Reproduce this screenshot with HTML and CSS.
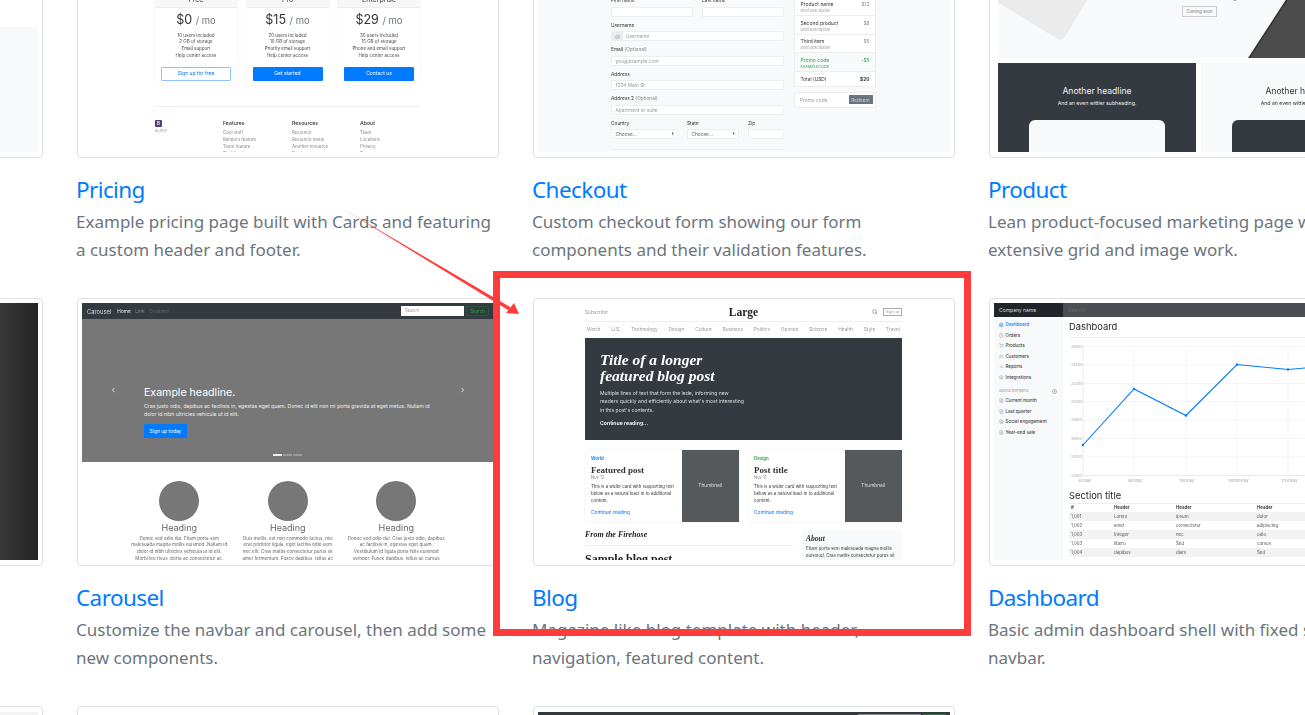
FILE: index.html
```html
<!DOCTYPE html>
<html lang="en">
<head>
	<meta charset="UTF-8">
	<title>Examples</title>
	<link rel="stylesheet" href="styles.css">
</head>
<body>
<div class="grid">

	<!-- row 1 -->
	<div class="item">
		<div class="card"><div class="thumb album-top"></div></div>
	</div>

	<div class="item">
		<div class="card"><div class="thumb pricing">
			<div class="plans">
				<div class="plan">
					<div class="plan-head">Free</div>
					<div class="price">$0 <small>/ mo</small></div>
					<ul><li>10 users included</li><li>2 GB of storage</li><li>Email support</li><li>Help center access</li></ul>
					<div class="plan-btn outline">Sign up for free</div>
				</div>
				<div class="plan">
					<div class="plan-head">Pro</div>
					<div class="price">$15 <small>/ mo</small></div>
					<ul><li>20 users included</li><li>10 GB of storage</li><li>Priority email support</li><li>Help center access</li></ul>
					<div class="plan-btn">Get started</div>
				</div>
				<div class="plan">
					<div class="plan-head">Enterprise</div>
					<div class="price">$29 <small>/ mo</small></div>
					<ul><li>30 users included</li><li>15 GB of storage</li><li>Phone and email support</li><li>Help center access</li></ul>
					<div class="plan-btn">Contact us</div>
				</div>
			</div>
			<div class="foot">
				<div><span class="logo">B</span><p class="copy">© 2017</p></div>
				<div><h5>Features</h5><p>Cool stuff</p><p>Random feature</p><p>Team feature</p><p>Stuff for devs</p></div>
				<div><h5>Resources</h5><p>Resource</p><p>Resource name</p><p>Another resource</p><p>Final one</p></div>
				<div><h5>About</h5><p>Team</p><p>Locations</p><p>Privacy</p><p>Terms</p></div>
			</div>
		</div></div>
	</div>

	<div class="item">
		<div class="card"><div class="thumb checkout">
			<div class="co-form">
				<div class="co-row">
					<div class="field half"><label>First name</label><div class="inp"></div></div>
					<div class="field half"><label>Last name</label><div class="inp"></div></div>
				</div>
				<div class="field"><label>Username</label><div class="inp addon"><b>@</b>Username</div></div>
				<div class="field"><label>Email <i>(Optional)</i></label><div class="inp">you@example.com</div></div>
				<div class="field"><label>Address</label><div class="inp">1234 Main St</div></div>
				<div class="field"><label>Address 2 <i>(Optional)</i></label><div class="inp">Apartment or suite</div></div>
				<div class="co-row">
					<div class="field country"><label>Country</label><div class="inp sel">Choose...<span>⬍</span></div></div>
					<div class="field state"><label>State</label><div class="inp sel">Choose...<span>⬍</span></div></div>
					<div class="field zip"><label>Zip</label><div class="inp"></div></div>
				</div>
				<div class="co-line"></div>
			</div>
			<div class="co-side">
				<div class="co-list">
					<div class="co-item"><div><h6>Product name</h6><small>Brief description</small></div><span>$12</span></div>
					<div class="co-item"><div><h6>Second product</h6><small>Brief description</small></div><span>$8</span></div>
					<div class="co-item"><div><h6>Third item</h6><small>Brief description</small></div><span>$5</span></div>
					<div class="co-item promo"><div><h6>Promo code</h6><small>EXAMPLECODE</small></div><span>-$5</span></div>
					<div class="co-item total"><b>Total (USD)</b><strong>$20</strong></div>
				</div>
				<div class="redeem"><div class="redeem-inp">Promo code</div><div class="redeem-btn">Redeem</div></div>
			</div>
		</div></div>
	</div>

	<div class="item">
		<div class="card"><div class="thumb product">
			<div class="pr-top">
				<svg class="pr-shapes" width="403" height="163" viewBox="0 0 403 163">
					<polygon points="-4,105 58,143 63,145 67,142 92,100 92,95 -4,95" fill="#ebebeb"/>
					<polygon points="250,163 304,80 403,80 403,163" fill="#333"/>
					<polygon points="252,163 306,80 403,80 403,163" fill="#4c4c4c"/>
				</svg>
				<p class="pr-sub">And an even wittier subheading to boost</p>
				<div class="pr-btn">Coming soon</div>
			</div>
			<div class="pr-panels">
				<div class="panel dark"><h4>Another headline</h4><p>And an even wittier subheading.</p><div class="pr-box"></div></div>
				<div class="panel light"><h4>Another headline</h4><p>And an even wittier subheading.</p><div class="pr-box"></div></div>
			</div>
		</div></div>
	</div>

	<!-- titles row 1 -->
	<div class="caption"></div>
	<div class="caption"><h3>Pricing</h3><p>Example pricing page built with Cards and featuring a custom header and footer.</p></div>
	<div class="caption"><h3>Checkout</h3><p>Custom checkout form showing our form components and their validation features.</p></div>
	<div class="caption"><h3>Product</h3><p>Lean product-focused marketing page with extensive grid and image work.</p></div>

	<!-- row 2 -->
	<div class="item">
		<div class="card"><div class="thumb cover"></div></div>
	</div>

	<div class="item">
		<div class="card"><div class="thumb carousel">
			<div class="ca-nav">
				<span class="ca-brand">Carousel</span>
				<span class="ca-link on">Home</span><span class="ca-link">Link</span><span class="ca-link off">Disabled</span>
				<div class="ca-search">Search</div><div class="ca-go">Search</div>
			</div>
			<div class="ca-hero">
				<svg class="ca-arrow prev" width="5" height="6" viewBox="0 0 5 6"><path d="M3.5 .8 1.4 3l2.1 2.2" fill="none" stroke="#ddd" stroke-width="1"/></svg>
				<svg class="ca-arrow next" width="5" height="6" viewBox="0 0 5 6"><path d="M1.5 .8 3.6 3 1.5 5.2" fill="none" stroke="#ddd" stroke-width="1"/></svg>
				<h2>Example headline.</h2>
				<p>Cras justo odio, dapibus ac facilisis in, egestas eget quam. Donec id elit non mi porta gravida at eget metus. Nullam id<br>dolor id nibh ultricies vehicula ut id elit.</p>
				<div class="ca-btn">Sign up today</div>
				<div class="ca-dots"><i class="on"></i><i></i><i></i></div>
			</div>
			<div class="ca-cols">
				<div class="ca-col"><span class="ball"></span><h4>Heading</h4><p>Donec sed odio dui. Etiam porta sem<br>malesuada magna mollis euismod. Nullam id<br>dolor id nibh ultricies vehicula ut id elit.<br>Morbi leo risus, porta ac consectetur ac.</p></div>
				<div class="ca-col"><span class="ball"></span><h4>Heading</h4><p>Duis mollis, est non commodo luctus, nisi<br>erat porttitor ligula, eget lacinia odio sem<br>nec elit. Cras mattis consectetur purus sit<br>amet fermentum. Fusce dapibus, tellus ac</p></div>
				<div class="ca-col"><span class="ball"></span><h4>Heading</h4><p>Donec sed odio dui. Cras justo odio, dapibus<br>ac facilisis in, egestas eget quam.<br>Vestibulum id ligula porta felis euismod<br>semper. Fusce dapibus, tellus ac cursus</p></div>
			</div>
		</div></div>
	</div>

	<div class="item">
		<div class="card"><div class="thumb blog">
			<div class="bl-head">
				<span class="bl-sub">Subscribe</span>
				<span class="bl-logo">Large</span>
				<span class="bl-tools">
					<svg width="6" height="6" viewBox="0 0 24 24" fill="none" stroke="#777" stroke-width="2.6"><circle cx="10.5" cy="10.5" r="7.5"/><path d="M21 21l-5.2-5.2"/></svg>
					<span class="bl-sign">Sign up</span>
				</span>
			</div>
			<div class="bl-nav"><span>World</span><span>U.S.</span><span>Technology</span><span>Design</span><span>Culture</span><span>Business</span><span>Politics</span><span>Opinion</span><span>Science</span><span>Health</span><span>Style</span><span>Travel</span></div>
			<div class="bl-hero">
				<h1>Title of a longer<br>featured blog post</h1>
				<p>Multiple lines of text that form the lede, informing new<br>readers quickly and efficiently about what's most interesting<br>in this post's contents.</p>
				<b>Continue reading...</b>
			</div>
			<div class="bl-cards">
				<div class="bl-card">
					<div class="bl-body">
						<span class="tag blue">World</span>
						<h3>Featured post</h3>
						<small>Nov 12</small>
						<p>This is a wider card with supporting text<br>below as a natural lead-in to additional<br>content.</p>
						<span class="more">Continue reading</span>
					</div>
					<div class="bl-thumb">Thumbnail</div>
				</div>
				<div class="bl-card">
					<div class="bl-body">
						<span class="tag green">Design</span>
						<h3>Post title</h3>
						<small>Nov 11</small>
						<p>This is a wider card with supporting text<br>below as a natural lead-in to additional<br>content.</p>
						<span class="more">Continue reading</span>
					</div>
					<div class="bl-thumb">Thumbnail</div>
				</div>
			</div>
			<div class="bl-low">
				<div class="bl-main">
					<h4>From the Firehose</h4>
					<h2>Sample blog post</h2>
				</div>
				<div class="bl-about">
					<h5>About</h5>
					<p>Etiam porta sem malesuada magna mollis euismod. Cras mattis consectetur purus sit amet fermentum.</p>
				</div>
			</div>
		</div></div>
	</div>

	<div class="item">
		<div class="card"><div class="thumb dash">
			<div class="da-nav"><span class="da-brand">Company name</span><span class="da-search">Search</span></div>
			<div class="da-wrap">
				<div class="da-side">
					<div class="da-link on"><svg viewBox="0 0 24 24" fill="#9cc8ff" stroke="currentColor" stroke-width="2"><path d="M3 9l9-7 9 7v11a2 2 0 0 1-2 2H5a2 2 0 0 1-2-2z"/></svg>Dashboard</div>
					<div class="da-link"><svg viewBox="0 0 24 24" fill="none" stroke="#888" stroke-width="2"><path d="M13 2H6a2 2 0 0 0-2 2v16a2 2 0 0 0 2 2h12a2 2 0 0 0 2-2V9z"/><path d="M13 2v7h7"/></svg>Orders</div>
					<div class="da-link"><svg viewBox="0 0 24 24" fill="none" stroke="#888" stroke-width="2"><circle cx="9" cy="21" r="1"/><circle cx="20" cy="21" r="1"/><path d="M1 1h4l2.7 13.4a2 2 0 0 0 2 1.6h9.7a2 2 0 0 0 2-1.6L23 6H6"/></svg>Products</div>
					<div class="da-link"><svg viewBox="0 0 24 24" fill="none" stroke="#888" stroke-width="2"><path d="M17 21v-2a4 4 0 0 0-4-4H5a4 4 0 0 0-4 4v2"/><circle cx="9" cy="7" r="4"/><path d="M23 21v-2a4 4 0 0 0-3-3.9M16 3.1a4 4 0 0 1 0 7.8"/></svg>Customers</div>
					<div class="da-link"><svg viewBox="0 0 24 24" fill="none" stroke="#888" stroke-width="2"><path d="M18 20V10M12 20V4M6 20v-6"/></svg>Reports</div>
					<div class="da-link"><svg viewBox="0 0 24 24" fill="none" stroke="#888" stroke-width="2"><path d="M12 2 2 7l10 5 10-5zM2 17l10 5 10-5M2 12l10 5 10-5"/></svg>Integrations</div>
					<div class="da-saved">SAVED REPORTS<svg width="5" height="5" viewBox="0 0 24 24" fill="none" stroke="#888" stroke-width="2.5"><circle cx="12" cy="12" r="10"/><path d="M12 8v8M8 12h8"/></svg></div>
					<div class="da-link"><svg viewBox="0 0 24 24" fill="none" stroke="#888" stroke-width="2"><path d="M14 2H6a2 2 0 0 0-2 2v16a2 2 0 0 0 2 2h12a2 2 0 0 0 2-2V8z"/><path d="M14 2v6h6M16 13H8M16 17H8"/></svg>Current month</div>
					<div class="da-link"><svg viewBox="0 0 24 24" fill="none" stroke="#888" stroke-width="2"><path d="M14 2H6a2 2 0 0 0-2 2v16a2 2 0 0 0 2 2h12a2 2 0 0 0 2-2V8z"/><path d="M14 2v6h6M16 13H8M16 17H8"/></svg>Last quarter</div>
					<div class="da-link"><svg viewBox="0 0 24 24" fill="none" stroke="#888" stroke-width="2"><path d="M14 2H6a2 2 0 0 0-2 2v16a2 2 0 0 0 2 2h12a2 2 0 0 0 2-2V8z"/><path d="M14 2v6h6M16 13H8M16 17H8"/></svg>Social engagement</div>
					<div class="da-link"><svg viewBox="0 0 24 24" fill="none" stroke="#888" stroke-width="2"><path d="M14 2H6a2 2 0 0 0-2 2v16a2 2 0 0 0 2 2h12a2 2 0 0 0 2-2V8z"/><path d="M14 2v6h6M16 13H8M16 17H8"/></svg>Year-end sale</div>
				</div>
				<div class="da-main">
					<h2>Dashboard</h2>
					<svg class="da-chart" width="236" height="145" viewBox="0 0 236 145">
						<g stroke="#eee" stroke-width=".6">
							<path d="M14 5.5H236M14 24H236M14 42.5H236M14 60.5H236M14 79H236M14 97.5H236M14 116H236"/>
							<path d="M65 5V134.5M117 5V134.5M168 5V134.5M219 5V134.5"/>
						</g>
						<path d="M14 5V134.5H236" fill="none" stroke="#ddd" stroke-width=".6"/>
						<g font-family="Inter, sans-serif" font-size="3.7" fill="#aaa">
							<text x="2" y="6.5">26000</text><text x="2" y="25">24000</text><text x="2" y="43.5">22000</text><text x="2" y="61.5">20000</text><text x="2" y="80">18000</text><text x="2" y="98.5">16000</text><text x="2" y="117">14000</text><text x="2" y="135.5">12000</text>
							<text x="9" y="140.5">Sunday</text><text x="59" y="140.5">Monday</text><text x="110" y="140.5">Tuesday</text><text x="159" y="140.5">Wednesday</text><text x="212" y="140.5">Thursday</text>
						</g>
						<path d="M14 104 65 48 117 74.5 168 23.5 219 28.5 236 27" fill="none" stroke="#007bff" stroke-width="1.1"/>
						<g fill="#007bff"><circle cx="14" cy="104" r="1.2"/><circle cx="65" cy="48" r="1.2"/><circle cx="117" cy="74.5" r="1.2"/><circle cx="168" cy="23.5" r="1.2"/><circle cx="219" cy="28.5" r="1.2"/></g>
					</svg>
					<h3>Section title</h3>
					<table class="da-table">
						<tr><th>#</th><th>Header</th><th>Header</th><th>Header</th><th>Header</th></tr>
						<tr><td>1,001</td><td>Lorem</td><td>ipsum</td><td>dolor</td><td>sit</td></tr>
						<tr><td>1,002</td><td>amet</td><td>consectetur</td><td>adipiscing</td><td>elit</td></tr>
						<tr><td>1,003</td><td>Integer</td><td>nec</td><td>odio</td><td>Praesent</td></tr>
						<tr><td>1,003</td><td>libero</td><td>Sed</td><td>cursus</td><td>ante</td></tr>
						<tr><td>1,004</td><td>dapibus</td><td>diam</td><td>Sed</td><td>nisi</td></tr>
					</table>
				</div>
			</div>
		</div></div>
	</div>

	<!-- titles row 2 -->
	<div class="caption"></div>
	<div class="caption"><h3>Carousel</h3><p>Customize the navbar and carousel, then add some new components.</p></div>
	<div class="caption"><h3>Blog</h3><p>Magazine like blog template with header, navigation, featured content.</p></div>
	<div class="caption"><h3>Dashboard</h3><p>Basic admin dashboard shell with fixed sidebar and navbar.</p></div>

	<!-- row 3, only the top edge shows -->
	<div class="item"><div class="card"><div class="thumb next-pale"></div></div></div>
	<div class="item"><div class="card"><div class="thumb"></div></div></div>
	<div class="item"><div class="card"><div class="thumb next-dark"><span class="nd-search"></span><span class="nd-go"></span></div></div></div>
</div>

<!-- the red annotation drawn over the page -->
<div class="frame"></div>
<svg class="arrow" width="1305" height="715" viewBox="0 0 1305 715">
	<polygon points="345,210 510.5,307.2 508.5,310.3" fill="#ff3b3b"/>
	<polygon points="519,314 506,313 514,303" fill="#ff3b3b"/>
</svg>
</body>
</html>
```

FILE: styles.css
```css
* {box-sizing: border-box;}
html, body {margin: 0; padding: 0; background: #fff;}
body {width: 1305px; height: 715px; overflow: hidden; font-family: "Noto Sans", sans-serif; color: #212529;}
h1, h2, h3, h4, h5, h6, p, ul {margin: 0; padding: 0; font-weight: normal; list-style: none;}

/* page grid */
.grid {display: grid; grid-template-columns: repeat(4, 422px); grid-auto-rows: 268px 140px; column-gap: 34px; margin: -110px 0 0 -379px;}
.card {height: 268px; border: 1px solid #dee2e6; border-radius: 4px; padding: 4px 4px 5px; background: #fff;}
.thumb {height: 257px; overflow: hidden; filter: blur(.4px); font-family: Inter, sans-serif; position: relative;}
.caption {padding-top: 18px; width: 415px; margin-left: -1px;}
.caption h3 {font-size: 22.5px; letter-spacing: -.6px; line-height: 28px; color: #007bff;}
.caption p {font-size: 17px; line-height: 28px; color: #6c757d; margin-top: 4px;}

/* left column leftovers */
.album-top {background: linear-gradient(#fff 132px, #f8f9fa 132px);}
.cover {background: linear-gradient(90deg, #444 60%, #3a3a3a 90%, #242424);}
.next-pale {background: #f3f3f3; margin-top: 1px;}
.next-dark {background: #343a40; margin-top: 1px; display: flex; justify-content: flex-end; gap: 2px; padding: 2px 4px 0 0;}
.nd-search {width: 63px; height: 12px; background: #8a8d90;}
.nd-go {width: 23px; height: 12px; background: #3f6d50;}

/* pricing */
.pricing {padding: 97px 74px 0 73px; color: #333;}
.plans {display: flex; justify-content: space-between;}
.plan {width: 82px; height: 93px; border-radius: 1.5px; box-shadow: 0 0 1.5px rgba(0, 0, 0, .12); text-align: center; font-size: 4.5px;}
.plan-head {height: 16px; line-height: 16px; background: #f7f7f7; font-size: 7px; border-bottom: 1px solid #eee;}
.price {font-size: 12.5px; line-height: 14px; margin-top: 5px;}
.price small {font-size: 9.5px; color: #6c757d;}
.plan ul {margin-top: 4.5px; line-height: 6.9px; color: #444;}
.plan-btn {margin: 7px 6px 0; height: 13.5px; line-height: 13.5px; background: #007bff; color: #fff; font-size: 5px; border-radius: 1px;}
.plan-btn.outline {background: #fff; color: #007bff; border: 1px solid #8ec2ff; line-height: 11.5px;}
.foot {display: grid; grid-template-columns: 68px 69px 68px 64px; margin-top: 21px; padding-top: 12.5px; border-top: 1px solid #eee; font-size: 4.4px; line-height: 7px; color: #888;}
.foot h5 {font-size: 5.2px; color: #333; font-weight: 500; margin-bottom: 2.5px;}
.logo {display: block; width: 7px; height: 7px; line-height: 7px; background: #563d7c; color: #fff; font-size: 5px; text-align: center; border-radius: 1px;}
.foot .copy {font-size: 3.4px; margin-top: 1.5px;}

/* checkout */
.checkout {display: flex; gap: 10px; padding: 102px 73px 0; background: #f8f9fa; font-size: 4.8px; color: #333;}
.co-form {width: 173px; flex: none;}
.co-row {display: flex; justify-content: space-between;}
.field {margin-bottom: 5px;}
.field label {display: block; height: 7px; line-height: 7px; margin-bottom: 2.5px;}
.field label i {font-style: normal; color: #888;}
.half {width: 82px;}
.country {width: 67px;}
.state {width: 52px;}
.zip {width: 36px;}
.inp {height: 10px; line-height: 9px; padding: 0 3.5px; background: #fff; border: 1px solid #eceef0; border-radius: 1px; color: #999; display: flex;}
.inp.addon {padding-left: 0;}
.inp.addon b {width: 11px; margin-right: 3px; text-align: center; font-weight: normal; background: #e9ecef;}
.inp.sel {justify-content: space-between; color: #666;}
.inp.sel span {font-size: 3.5px;}
.co-line {margin-top: 5px; border-top: 1px solid #eee;}
.co-side {width: 82px; flex: none; margin-top: -.5px;}
.co-list {background: #fff; border: .5px solid #eee;}
.co-item {display: flex; justify-content: space-between; padding: 3.5px 5.5px 2px; height: 18.5px; border-bottom: .5px solid #eee; color: #888;}
.co-item h6 {font-size: 5px; line-height: 7px; color: #333;}
.co-item small {display: block; font-size: 3.8px; line-height: 6px; color: #999;}
.co-item.promo {background: #f8f9fa; color: #28a745;}
.promo h6, .promo small {color: #28a745;}
.co-item.total {height: 14px; border: 0; line-height: 8px; padding-top: 3px; color: #333;}
.total b {font-weight: normal;}
.redeem {display: flex; margin-top: 5px; height: 16px; padding: 2.5px; background: #fff; border: .5px solid #eee;}
.redeem-inp {flex: 1; padding-left: 2.5px; line-height: 10.5px; color: #999;}
.redeem-btn {width: 24px; text-align: center; line-height: 10.5px; background: #6c757d; color: #ccc;}

/* product */
.product {padding-left: 4px; width: 420px;}
.pr-top {position: relative; width: 403px; height: 163px; background: #f8f9fa; display: flex; flex-direction: column; align-items: center; justify-content: flex-end; padding-bottom: 41px; overflow: hidden;}
.pr-shapes {position: absolute; left: 0; top: 0;}
.pr-sub {position: relative; font-size: 7px; line-height: 9px; color: #555; margin-bottom: 5px;}
.pr-btn {position: relative; width: 35px; height: 11px; line-height: 9.5px; border: 1px solid #ccc; text-align: center; font-size: 4.2px; color: #777;}
.pr-panels {display: flex; gap: 5px; margin-top: 5px;}
.panel {width: 198px; height: 90px; flex: none; text-align: center; overflow: hidden; padding-top: 22.5px;}
.panel h4 {font-size: 8.6px; line-height: 11px;}
.panel p {font-size: 5.2px; line-height: 8px; margin-top: 2.5px;}
.pr-box {width: 136px; height: 60px; margin: 13px auto 0; border-radius: 6px 6px 0 0;}
.panel.dark {background: #343a40; color: #f1f1f1;}
.panel.dark .pr-box {background: #f8f9fa;}
.panel.light {background: #f8f9fa; color: #333;}
.panel.light .pr-box {background: #343a40;}

/* carousel */
.ca-nav {display: flex; align-items: center; height: 16px; padding: 0 5px; background: #343a40; font-size: 4.8px; color: #888;}
.ca-brand {font-size: 5.8px; color: #ddd; margin-right: 6px;}
.ca-link {margin-right: 4.5px;}
.ca-link.on {color: #eee;}
.ca-link.off {color: #5c6166;}
.ca-search {margin-left: auto; width: 63px; height: 10px; line-height: 10px; padding-left: 4px; background: #fff; color: #999; font-size: 4.2px;}
.ca-go {margin-left: 2px; width: 23px; height: 10px; line-height: 9px; text-align: center; border: .7px solid #28563a; color: #28a745; font-size: 4.4px;}
.ca-hero {position: relative; height: 143px; background: #777; color: #fff; display: flex; flex-direction: column; justify-content: flex-end; padding: 0 40px 24px 62px; white-space: nowrap;}
.ca-hero h2 {font-size: 10.6px; line-height: 13px;}
.ca-hero p {font-size: 5.15px; line-height: 8.3px; margin-top: 2.5px; color: #eee;}
.ca-btn {margin-top: 5.5px; width: 43px; height: 14px; line-height: 14px; text-align: center; background: #007bff; font-size: 4.9px;}
.ca-arrow {position: absolute; top: 68px;}
.ca-arrow.prev {left: 29px;}
.ca-arrow.next {left: 378px;}
.ca-dots {position: absolute; left: 191px; top: 135px; display: flex; gap: 1px;}
.ca-dots i {width: 9px; height: 1.6px; background: #9a9a9a;}
.ca-dots i.on {background: #eee;}
.ca-cols {display: grid; grid-template-columns: repeat(3, 108.5px); padding: 19px 0 0 43px;}
.ca-col {text-align: center; color: #666; white-space: nowrap;}
.ball {display: block; width: 40px; height: 40px; margin: 0 auto; border-radius: 50%; background: #777;}
.ca-col h4 {font-size: 9px; line-height: 11px; padding-top: .5px;}
.ca-col p {font-size: 4.6px; line-height: 6.8px; margin-top: 3px;}

/* blog */
.blog {padding: 0 48px 0 47px; color: #333; font-size: 4.8px;}
.bl-head {display: flex; align-items: center; justify-content: space-between; height: 19px; border-bottom: .5px solid #eee; color: #999;}
.bl-sub, .bl-tools {width: 40px;}
.bl-logo {font-family: "Liberation Serif", serif; font-weight: bold; font-size: 11.5px; color: #222;}
.bl-tools {display: flex; align-items: center; justify-content: flex-end; gap: 5px;}
.bl-sign {width: 19px; height: 8px; line-height: 7px; text-align: center; border: .5px solid #aaa; font-size: 3.6px;}
.bl-nav {display: flex; justify-content: space-between; height: 14px; line-height: 14px; padding: 0 2px; margin-bottom: 2px; color: #999;}
.bl-hero {height: 102px; background: #343a40; color: #fff; padding: 14px 15px 0;}
.bl-hero h1 {font-family: "Liberation Serif", serif; font-style: italic; font-weight: bold; font-size: 15.5px; line-height: 16px;}
.bl-hero p {font-size: 5.05px; line-height: 8.5px; margin-top: 4.75px; color: #ddd;}
.bl-hero b {display: block; font-size: 5.2px; line-height: 8px; margin-top: 4.75px; font-weight: 600;}
.bl-cards {display: flex; justify-content: space-between; margin-top: 10px;}
.bl-card {display: flex; width: 154px; height: 71.5px; box-shadow: 0 0 1.5px rgba(0, 0, 0, .15); border-radius: 1px;}
.bl-body {flex: 1; padding: 6px 2px 0 6px; white-space: nowrap;}
.bl-body span, .bl-body small {display: block;}
.tag {line-height: 6px; font-size: 4.4px; font-weight: 600;}
.tag.blue {color: #007bff;}
.tag.green {color: #28a745;}
.bl-body h3 {font-family: "Liberation Serif", serif; font-weight: bold; font-size: 9px; line-height: 10px; margin-top: 3px;}
.bl-body small {font-size: 4.2px; line-height: 6px; color: #888;}
.bl-body p {font-size: 4.4px; line-height: 7px; margin-top: 1.5px;}
.more {color: #007bff; line-height: 6px; margin-top: 5.5px;}
.bl-thumb {width: 57.5px; flex: none; background: #55595c; color: #ddd; font-size: 4.8px; line-height: 71.5px; text-align: center;}
.bl-low {display: flex; gap: 9px; margin-top: 8.5px;}
.bl-main {width: 208px; flex: none; font-family: "Liberation Serif", serif; font-weight: bold; color: #222;}
.bl-main h4 {font-size: 8px; line-height: 10px; font-style: italic; font-weight: bold; padding-bottom: 4.5px; border-bottom: .5px solid #eee;}
.bl-main h2 {font-size: 12px; line-height: 13px; font-weight: bold; margin-top: 7px;}
.bl-about {width: 100px; height: 40px; background: #f8f9fa; padding: 4px;}
.bl-about h5 {font-family: "Liberation Serif", serif; font-size: 7.5px; line-height: 10px; font-style: italic; font-weight: bold;}
.bl-about p {font-size: 4.4px; line-height: 7px; margin-top: 1px;}

/* dashboard */
.da-nav {display: flex; height: 14px; line-height: 14px; background: #4b4f54; font-size: 5px; color: #666;}
.da-brand {width: 69px; padding-left: 5px; background: #212529; color: #ddd; margin-right: 5px;}
.da-wrap {display: flex; height: 243px;}
.da-side {width: 69px; flex: none; padding-top: 2.25px; background: #f8f9fa; font-size: 4.5px; font-weight: 500; color: #444;}
.da-link {display: flex; align-items: center; gap: 2px; height: 10.5px; padding-left: 5px;}
.da-link svg {width: 4.5px; height: 5px; flex: none;}
.da-link.on {color: #007bff;}
.da-saved {display: flex; justify-content: space-between; align-items: center; height: 6px; margin: 5.75px 0 1.25px; padding: 0 6px 0 5px; font-size: 3.6px; color: #999;}
.da-main {flex: 1; min-width: 0; padding-left: 6px; overflow: hidden;}
.da-main h2 {font-size: 9.4px; line-height: 12px; margin-top: 4px; padding-bottom: 4px; border-bottom: .5px solid #eee; width: 300px;}
.da-chart {display: block; margin-top: 3px;}
.da-main h3 {font-size: 9.4px; line-height: 12px; margin-top: 4px;}
.da-table {width: 380px; table-layout: fixed; border-collapse: collapse; margin-top: .5px; font-size: 4.4px; color: #555;}
.da-table th {height: 9px; padding: 0 2px; text-align: left; font-weight: 600; color: #333; border-top: .5px solid #eee;}
.da-table td {height: 9px; padding: 0 2px;}
.da-table th:nth-child(1) {width: 43px;}
.da-table th:nth-child(2) {width: 62px;}
.da-table th:nth-child(3) {width: 81px;}
.da-table th:nth-child(4) {width: 81px;}
.da-table tr:nth-child(even) {background: #f2f2f2;}

/* annotation */
.frame {position: absolute; left: 493px; top: 271px; width: 478px; height: 365px; border: 7px solid #ff3b3b;}
.arrow {position: absolute; left: 0; top: 0;}
```
